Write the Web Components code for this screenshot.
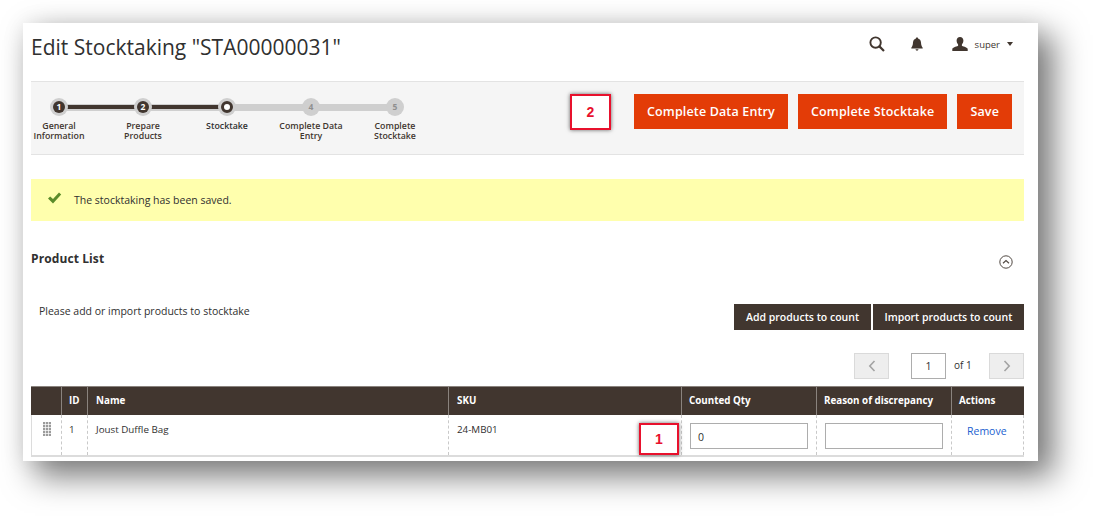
<!DOCTYPE html>
<html>
<head>
<meta charset="utf-8">
<title>Edit Stocktaking</title>
<style>
    html, body { margin: 0; padding: 0; background: #fff; }
    body { font-family: "Open Sans", "Liberation Sans", sans-serif; color: #303030; overflow: hidden; height: 516px; }
</style>
</head>
<body>
<app-window>
    <page-header title="Edit Stocktaking &quot;STA00000031&quot;" user="super"></page-header>
    <step-bar>
        <step-item num="1" state="done">General<br>Information</step-item>
        <step-item num="2" state="done">Prepare<br>Products</step-item>
        <step-item num="3" state="current">Stocktake</step-item>
        <step-item num="4">Complete Data<br>Entry</step-item>
        <step-item num="5">Complete<br>Stocktake</step-item>
        <call-out slot="actions" style="left: 570px; top: 94px; width: 41px; height: 36px;">2</call-out>
        <action-button slot="actions">Complete Data Entry</action-button>
        <action-button slot="actions">Complete Stocktake</action-button>
        <action-button slot="actions">Save</action-button>
    </step-bar>
    <notice-bar>The stocktaking has been saved.</notice-bar>
    <product-list></product-list>
    <call-out style="left: 639px; top: 423px; width: 40px; height: 32px;">1</call-out>
</app-window>

<script>
class AppWindow extends HTMLElement {
    constructor() {
        super();
        this.attachShadow({ mode: "open" }).innerHTML = `
        <style>
            :host {
                display: block;
                box-sizing: border-box;
                width: 1015px;
                height: 438px;
                margin: 23px 0 0 23px;
                padding: 0 14px 0 8px;
                background: #fff;
                overflow: visible;
                box-shadow: 14px 14px 30px 2px rgba(0, 0, 0, .5), 0 0 22px rgba(0, 0, 0, .08);
            }
        </style>
        <slot></slot>`;
    }
}

class PageHeader extends HTMLElement {
    constructor() {
        super();
        this.attachShadow({ mode: "open" });
    }

    connectedCallback() {
        this.shadowRoot.innerHTML = `
        <style>
            :host {
                display: flex;
                align-items: center;
                height: 58px;
                padding-right: 11px;
            }
            h1 {
                flex: 1;
                margin: 0 0 10px;
                font-size: 21px;
                font-weight: 400;
                color: #303030;
            }
            .icons { display: flex; align-items: center; margin-bottom: 16px; }
            svg { display: block; fill: #41362f; }
            .search { margin-right: 26px; }
            .bell { margin-right: 29px; }
            .user { margin-right: 7px; }
            span { font-size: 9.500px; color: #41362f; }
            i { width: 0; height: 0; margin-left: 7px; border: 3px solid transparent; border-top: 4px solid #41362f; border-bottom: 0; }
        </style>
        <h1>${this.getAttribute("title")}</h1>
        <div class="icons">
            <svg class="search" width="16" height="16" viewBox="0 0 16 16"><circle cx="6.6" cy="6.6" r="5.2" fill="none" stroke="#41362f" stroke-width="1.9"/><path d="M10.4 10.4L15 15" stroke="#41362f" stroke-width="2.2" fill="none"/></svg>
            <svg class="bell" width="12" height="14" viewBox="0 0 12 14"><path d="M6 0.6c.8 0 1.2.5 1.3 1.1C9 2.2 9.9 3.600 10 5.500c.1 2.500.7 4 1.700 5.200v.8H.3v-.8C1.300 9.500 1.900 8 2 5.500 2.100 3.600 3 2.200 4.700 1.700 4.800 1.100 5.200.6 6 .6zM4.500 12.300h3C7.400 13.200 6.800 13.700 6 13.700s-1.400-.5-1.500-1.400z"/></svg>
            <svg class="user" width="16" height="14" viewBox="0 0 16 14"><path d="M8 0c2.100 0 3.400 1.500 3.400 3.600 0 1.500-.6 3-1.500 3.900v1.300c.4.500 5.100 1.300 5.800 3V14H.3v-2.200c.7-1.700 5.400-2.500 5.800-3V7.500c-.9-.9-1.500-2.400-1.500-3.900C4.600 1.500 5.900 0 8 0z"/></svg>
            <span>${this.getAttribute("user")}</span>
            <i></i>
        </div>`;
    }
}

class StepBar extends HTMLElement {
    constructor() {
        super();
        this.attachShadow({ mode: "open" }).innerHTML = `
        <style>
            :host {
                display: flex;
                justify-content: space-between;
                box-sizing: border-box;
                height: 74px;
                padding: 12px 12px 0 0;
                background: #f5f5f5;
                border-top: 1px solid #e3e3e3;
                border-bottom: 1px solid #e3e3e3;
            }
            .steps { display: flex; margin-left: -14px; }
            .actions { display: flex; gap: 10px; height: 35px; }
        </style>
        <div class="steps"><slot></slot></div>
        <div class="actions"><slot name="actions"></slot></div>`;
    }
}

class StepItem extends HTMLElement {
    constructor() {
        super();
        this.attachShadow({ mode: "open" });
    }

    connectedCallback() {
        const state = this.getAttribute("state") || "todo";
        this.shadowRoot.innerHTML = `
        <style>
            :host {
                display: block;
                position: relative;
                width: 84px;
                margin-top: 4px;
                font-size: 8.800px;
                font-weight: 600;
                line-height: 10.300px;
                text-align: center;
                color: ${state === "current" ? "#303030" : "#41362f"};
            }
            .rail { position: relative; height: 18px; margin-bottom: 5px; }
            .rail::before {
                content: "";
                position: absolute;
                left: 0;
                right: 0;
                top: 5.500px;
                height: 7px;
                background: #cfcfcf;
            }
            :host([num="1"]) .rail::before { left: 50%; }
            :host([num="5"]) .rail::before { right: 50%; }
            .rail::after {
                content: "";
                position: absolute;
                left: 0;
                right: 0;
                top: 7px;
                height: 4px;
                background: ${state === "done" ? "#41362f" : "transparent"};
            }
            :host([num="1"]) .rail::after { left: 50%; }
            :host([state="current"]) .rail::after { right: 50%; background: #41362f; }
            .halo {
                position: absolute;
                z-index: 1;
                left: 33px;
                top: 0;
                box-sizing: border-box;
                display: flex;
                align-items: center;
                justify-content: center;
                width: 18px;
                height: 18px;
                border-radius: 50%;
                background: #cfcfcf;
            }
            .dot {
                display: flex;
                align-items: center;
                justify-content: center;
                box-sizing: border-box;
                width: 12px;
                height: 12px;
                border-radius: 50%;
                font-size: 8.500px;
                font-weight: 700;
                line-height: 1;
                background: ${state === "done" ? "#41362f" : "transparent"};
                color: ${state === "done" ? "#fff" : "#8f8f8f"};
            }
            .ring { background: #fff; border: 3px solid #41362f; }
        </style>
        <div class="rail"><div class="halo">${state === "current"
            ? '<div class="dot ring"></div>'
            : `<div class="dot">${this.getAttribute("num")}</div>`}</div></div>
        <slot></slot>`;
    }
}

class ActionButton extends HTMLElement {
    constructor() {
        super();
        this.attachShadow({ mode: "open" }).innerHTML = `
        <style>
            :host {
                display: flex;
                align-items: center;
                padding: 0 13px;
                height: 35px;
                font-size: 12.500px;
                font-weight: 600;
                letter-spacing: .15px;
                color: #fff;
                background: #e33c07;
            }
        </style>
        <slot></slot>`;
    }
}

class CallOut extends HTMLElement {
    constructor() {
        super();
        this.attachShadow({ mode: "open" }).innerHTML = `
        <style>
            :host {
                position: absolute;
                box-sizing: border-box;
                display: flex;
                align-items: center;
                justify-content: center;
                padding-bottom: 1px;
                font-family: "Liberation Sans", sans-serif;
                font-size: 14px;
                font-weight: 700;
                color: #e8112d;
                background: #fff;
                border: 2px solid #e8112d;
                box-shadow: 0 0 4px rgba(0, 0, 0, .6);
            }
        </style>
        <slot></slot>`;
    }
}

class NoticeBar extends HTMLElement {
    constructor() {
        super();
        this.attachShadow({ mode: "open" }).innerHTML = `
        <style>
            :host {
                display: flex;
                align-items: center;
                height: 42px;
                margin-top: 24px;
                padding-left: 16px;
                font-size: 10.500px;
                color: #303030;
                background: #ffffad;
            }
            svg { display: block; margin-right: 12px; margin-top: -4px; }
        </style>
        <svg width="15" height="12" viewBox="0 0 15 12"><path d="M1 6.500l2.200-2L6 7l6-6.500 2.200 2L6 11.500z" fill="#5b8c2a"/></svg>
        <slot></slot>`;
    }
}

class ProductList extends HTMLElement {
    constructor() {
        super();
        this.attachShadow({ mode: "open" }).innerHTML = `
        <style>
            :host { display: block; }
            .title {
                display: flex;
                justify-content: space-between;
                align-items: flex-start;
                height: 61px;
                padding: 30px 11px 0 0;
                box-sizing: border-box;
            }
            h2 { margin: 0; font-size: 12px; line-height: 16px; font-weight: 700; letter-spacing: .1px; color: #303030; }
            .title svg { display: block; margin-top: 4px; }
            .tools {
                display: flex;
                justify-content: space-between;
                height: 26px;
                margin-top: 22px;
            }
            .tools p { margin: 0 0 0 8px; font-size: 10.500px; line-height: 15px; color: #303030; }
            .tools div { display: flex; gap: 2px; }
            .dark {
                display: flex;
                align-items: center;
                padding: 0 11.700px;
                font-size: 10.500px;
                font-weight: 600;
                color: #fff;
                background: #41362f;
            }
            .pager {
                display: flex;
                align-items: center;
                justify-content: flex-end;
                height: 26px;
                margin-top: 23px;
            }
            .pager .arrow {
                display: flex;
                align-items: center;
                justify-content: center;
                box-sizing: border-box;
                width: 35px;
                height: 26px;
                background: #eeeeee;
                border: 1px solid #dadada;
            }
            .pager .page {
                box-sizing: border-box;
                width: 35px;
                height: 26px;
                margin-left: 22px;
                padding-top: 5px;
                text-align: center;
                font-size: 10.500px;
                color: #303030;
                background: #fff;
                border: 1px solid #adadad;
            }
            .pager .of { width: 18px; margin: 0 17px 0 8px; font-size: 10px; white-space: nowrap; color: #303030; padding-bottom: 2px; }
            .pager svg { display: block; }
            data-grid { margin-top: 7px; }
        </style>
        <div class="title">
            <h2>Product List</h2>
            <svg width="14" height="14" viewBox="0 0 14 14" fill="none" stroke="#514943"><circle cx="7" cy="7" r="6.200"/><path d="M4 8.200L7 5.500l3 2.700" stroke-width="1.200"/></svg>
        </div>
        <div class="tools">
            <p>Please add or import products to stocktake</p>
            <div>
                <span class="dark">Add products to count</span>
                <span class="dark">Import products to count</span>
            </div>
        </div>
        <div class="pager">
            <span class="arrow"><svg width="8" height="12" viewBox="0 0 8 12" fill="none" stroke="#a3a3a3" stroke-width="1.600"><path d="M6.500 1L1.800 6l4.700 5"/></svg></span>
            <span class="page">1</span>
            <span class="of">of 1</span>
            <span class="arrow"><svg width="8" height="12" viewBox="0 0 8 12" fill="none" stroke="#a3a3a3" stroke-width="1.600"><path d="M1.500 1l4.700 5-4.700 5"/></svg></span>
        </div>
        <data-grid></data-grid>`;
    }
}

class DataGrid extends HTMLElement {
    constructor() {
        super();
        this.attachShadow({ mode: "open" }).innerHTML = `
        <style>
            :host { display: block; }
            .row {
                display: grid;
                grid-template-columns: 30px 26px 361px 233px 135px 135px 73px;
            }
            .head {
                height: 29px;
                box-sizing: border-box;
                background: #41362f;
                border-top: 1px solid #8a837e;
                font-size: 9.800px;
                font-weight: 700;
                color: #fff;
            }
            .head > div {
                display: flex;
                align-items: center;
                padding: 0 0 2px 7px;
                border-left: 1px solid #8a837e;
            }
            .head > div:first-child { border-left: 0; }
            .head > .wide { padding-left: 8px; }
            .body {
                height: 42px;
                box-sizing: border-box;
                font-size: 9.800px;
                color: #303030;
                border-bottom: 2px solid #dcdcdc;
            }
            .body > div {
                padding: 8px 0 0 7px;
                border-left: 1px dashed #c9c9c9;
            }
            .body > .wide { padding-left: 8px; }
            .body > div:first-child { border-left: 1px solid #dcdcdc; padding: 7px 0 0 11px; }
            .body > div:last-child { border-right: 1px dashed #c9c9c9; }
            .field {
                display: block;
                box-sizing: border-box;
                width: 118px;
                height: 26px;
                margin-top: 0;
                padding: 6px 0 0 7px;
                font-size: 10.500px;
                background: #fff;
                border: 1px solid #adadad;
            }
            .body > .qty { padding: 8px 0 0 8px; }
            .body > .act { padding: 9px 0 0 15px; font-size: 10.500px; color: #1c5fd0; }
            svg { display: block; }
        </style>
        <div class="row head">
            <div></div><div>ID</div><div class="wide">Name</div><div class="wide">SKU</div>
            <div>Counted Qty</div><div>Reason of discrepancy</div><div>Actions</div>
        </div>
        <div class="row body">
            <div><svg width="8" height="14" viewBox="0 0 8 14" fill="#9b9b9b">
                <rect x="0" y="0" width="2.300" height="2.300"/><rect x="3" y="0" width="2.300" height="2.300"/><rect x="6" y="0" width="2" height="2.300"/>
                <rect x="0" y="3" width="2.300" height="2.300"/><rect x="3" y="3" width="2.300" height="2.300"/><rect x="6" y="3" width="2" height="2.300"/>
                <rect x="0" y="6" width="2.300" height="2.300"/><rect x="3" y="6" width="2.300" height="2.300"/><rect x="6" y="6" width="2" height="2.300"/>
                <rect x="0" y="9" width="2.300" height="2.300"/><rect x="3" y="9" width="2.300" height="2.300"/><rect x="6" y="9" width="2" height="2.300"/>
                <rect x="0" y="12" width="2.300" height="2"/><rect x="3" y="12" width="2.300" height="2"/><rect x="6" y="12" width="2" height="2"/>
            </svg></div>
            <div>1</div>
            <div class="wide">Joust Duffle Bag</div>
            <div class="wide">24-MB01</div>
            <div class="qty"><span class="field">0</span></div>
            <div class="qty"><span class="field"></span></div>
            <div class="act">Remove</div>
        </div>`;
    }
}

customElements.define("app-window", AppWindow);
customElements.define("page-header", PageHeader);
customElements.define("step-bar", StepBar);
customElements.define("step-item", StepItem);
customElements.define("action-button", ActionButton);
customElements.define("call-out", CallOut);
customElements.define("notice-bar", NoticeBar);
customElements.define("data-grid", DataGrid);
customElements.define("product-list", ProductList);
</script>
</body>
</html>
